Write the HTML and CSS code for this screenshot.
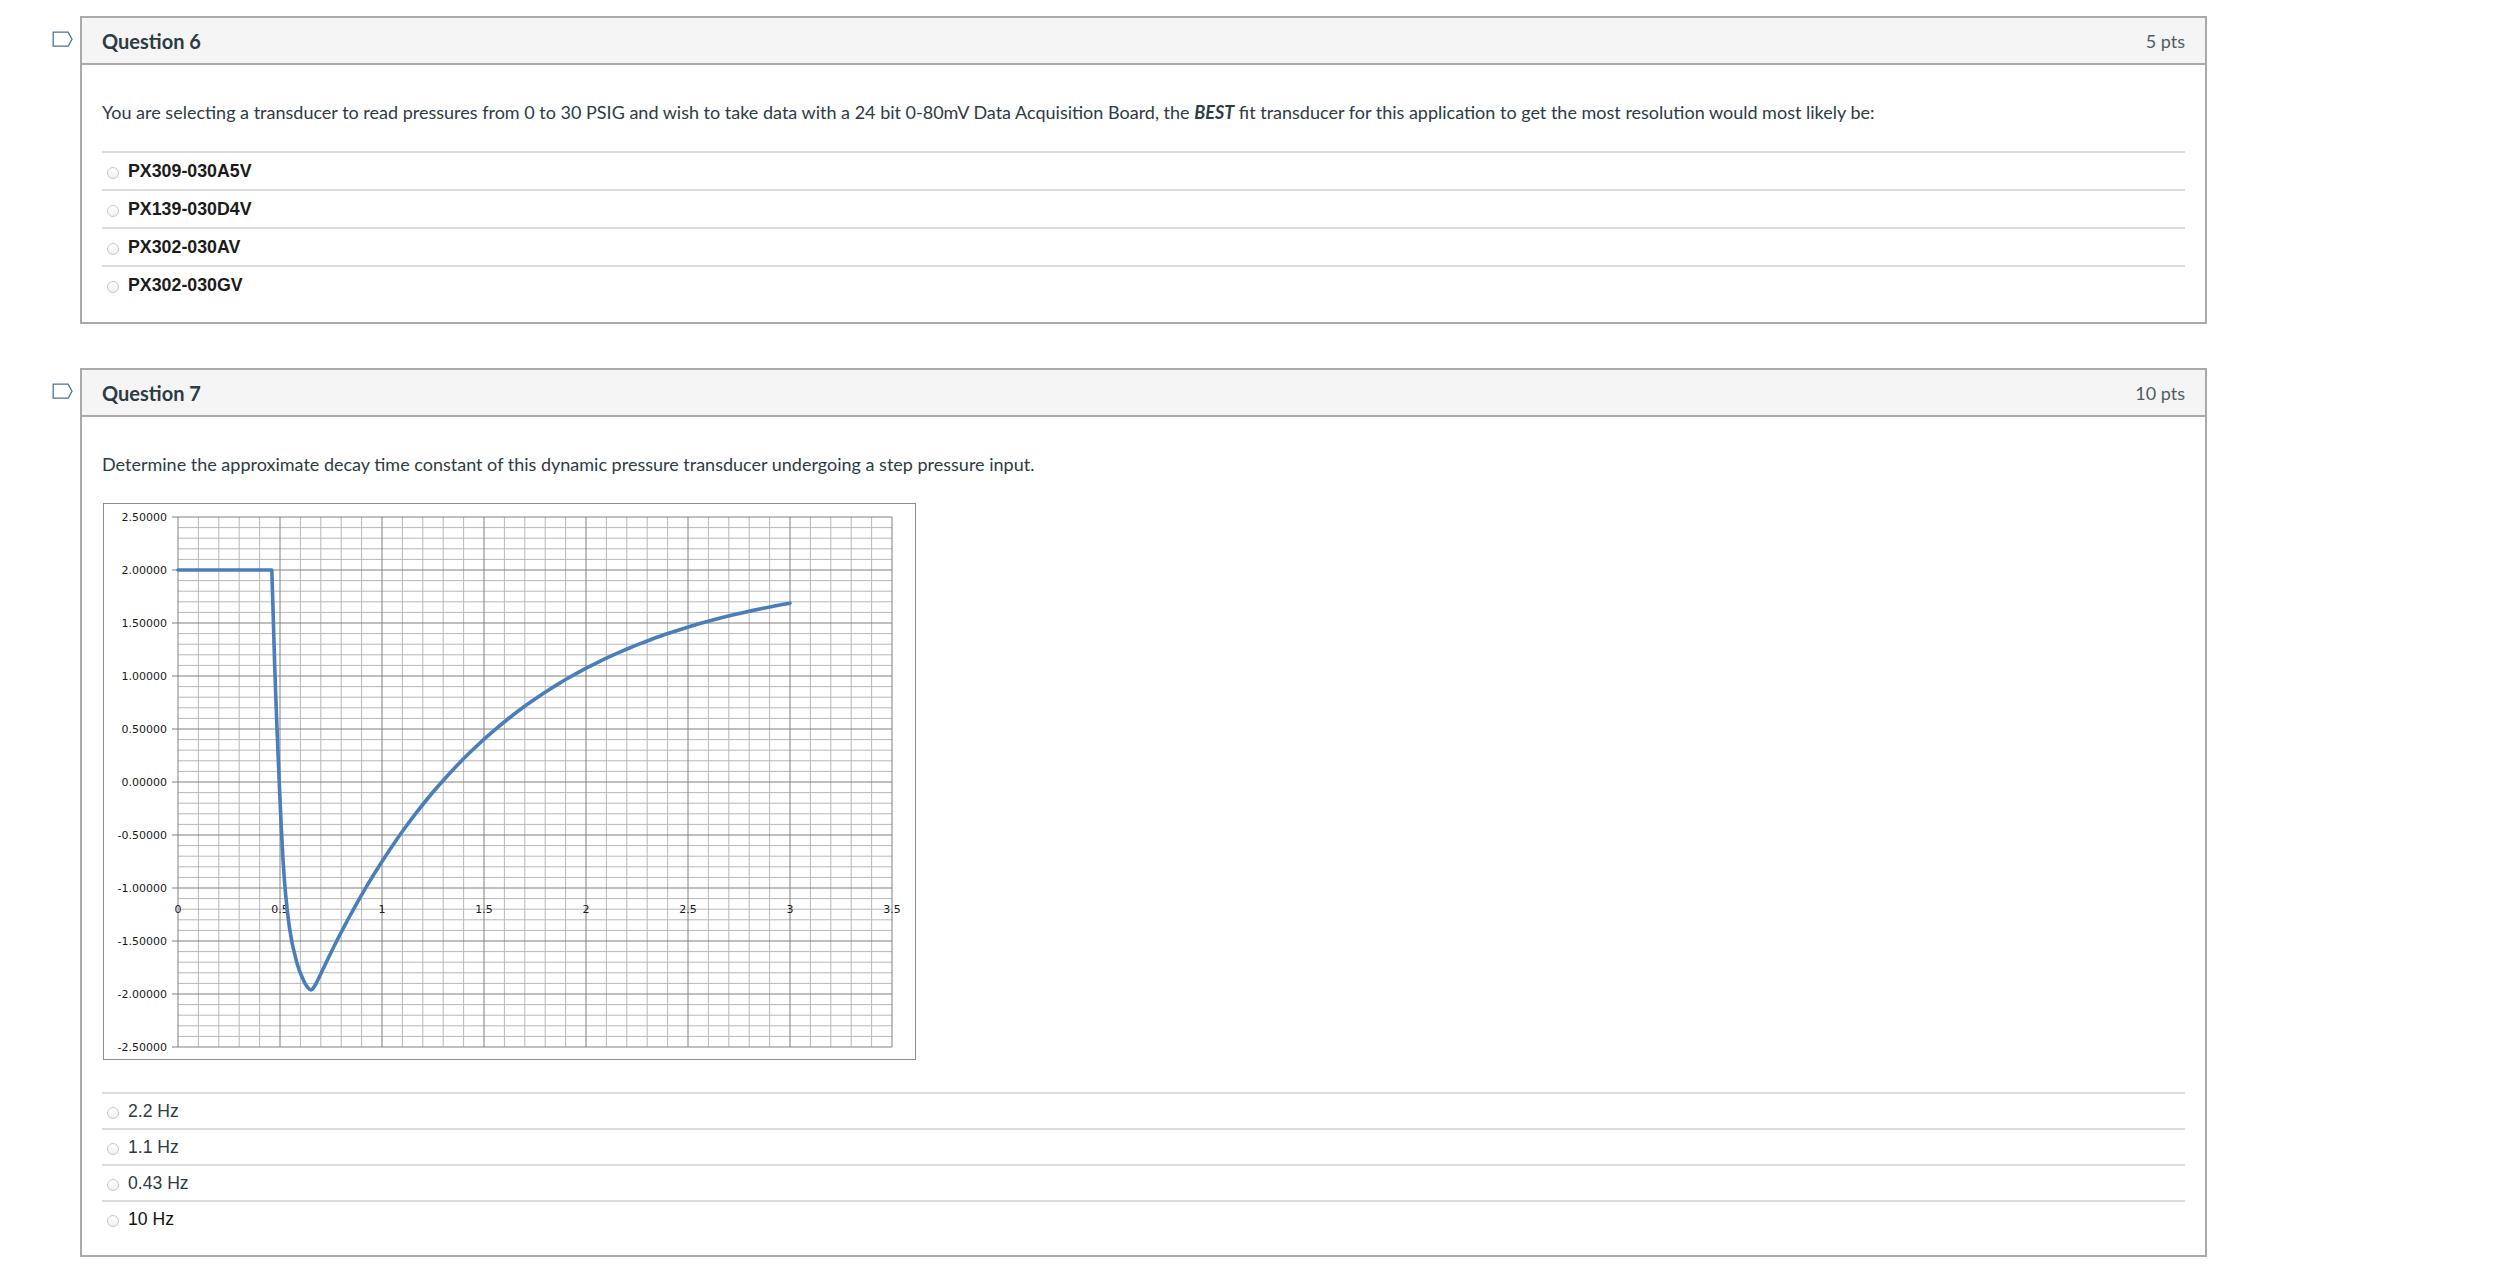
FILE: index.html
```html
<!DOCTYPE html>
<html lang="en">
<head>
<meta charset="utf-8">
<title>Quiz</title>
<link rel="stylesheet" href="styles.css">
</head>
<body>
<div class="quiz">

  <div class="question-row">
    <div class="flag">
      <svg width="22" height="17" viewBox="0 0 22 17"><path class="flag-path" d="M1.2 1.2H16.2L20 8.2L16.2 15.2H1.2Z"/></svg>
    </div>
    <div class="question">
      <div class="q-header">
        <span class="q-name">Question 6</span>
        <span class="q-pts">5 pts</span>
      </div>
      <div class="q-body">
        <div class="q-text">You are selecting a transducer to read pressures from 0 to 30 PSIG and wish to take data with a 24 bit 0-80mV Data Acquisition Board, the <strong><em>BEST</em></strong> fit transducer for this application to get the most resolution would most likely be:</div>
        <div class="answers answers-bold">
          <div class="answer"><span class="radio"></span><span class="answer-label">PX309-030A5V</span></div>
          <div class="answer"><span class="radio"></span><span class="answer-label">PX139-030D4V</span></div>
          <div class="answer"><span class="radio"></span><span class="answer-label">PX302-030AV</span></div>
          <div class="answer"><span class="radio"></span><span class="answer-label">PX302-030GV</span></div>
        </div>
      </div>
    </div>
  </div>

  <div class="question-row second">
    <div class="flag">
      <svg width="22" height="17" viewBox="0 0 22 17"><path class="flag-path" d="M1.2 1.2H16.2L20 8.2L16.2 15.2H1.2Z"/></svg>
    </div>
    <div class="question">
      <div class="q-header">
        <span class="q-name">Question 7</span>
        <span class="q-pts">10 pts</span>
      </div>
      <div class="q-body">
        <div class="q-text q-text-figure">
          <p class="q-para">Determine the approximate decay time constant of this dynamic pressure transducer undergoing a step pressure input.</p>
          <div class="chart">
            <svg class="chart-svg" width="811" height="555" viewBox="0 0 811 555">
              <path id="grid-minor" class="grid-minor" d=""/>
              <path id="grid-major" class="grid-major" d=""/>
              <path id="ticks" class="grid-major" d=""/>
              <g class="ylabels">
                <text x="63" y="17">2.50000</text>
                <text x="63" y="70">2.00000</text>
                <text x="63" y="123">1.50000</text>
                <text x="63" y="176">1.00000</text>
                <text x="63" y="229">0.50000</text>
                <text x="63" y="282">0.00000</text>
                <text x="63" y="335">-0.50000</text>
                <text x="63" y="388">-1.00000</text>
                <text x="63" y="441">-1.50000</text>
                <text x="63" y="494">-2.00000</text>
                <text x="63" y="547">-2.50000</text>
              </g>
              <g class="xlabels">
                <text x="74" y="409">0</text>
                <text x="176" y="409">0.5</text>
                <text x="278" y="409">1</text>
                <text x="380" y="409">1.5</text>
                <text x="482" y="409">2</text>
                <text x="584" y="409">2.5</text>
                <text x="686" y="409">3</text>
                <text x="788" y="409">3.5</text>
              </g>
              <path id="curve" class="curve" d=""/>
            </svg>
          </div>
        </div>
        <div class="answers answers-plain">
          <div class="answer"><span class="radio"></span><span class="answer-label">2.2 Hz</span></div>
          <div class="answer"><span class="radio"></span><span class="answer-label">1.1 Hz</span></div>
          <div class="answer"><span class="radio"></span><span class="answer-label">0.43 Hz</span></div>
          <div class="answer"><span class="radio"></span><span class="answer-label dark">10 Hz</span></div>
        </div>
      </div>
    </div>
  </div>

</div>
<script src="script.js"></script>
</body>
</html>
```

FILE: styles.css
```css
html, body {
  margin: 0;
  padding: 0;
  background: #ffffff;
}

body {
  font-family: Lato, "Open Sans", "Liberation Sans", sans-serif;
  color: #2d3b45;
  width: 2518px;
}

.quiz {
  padding: 16px 0 0 52px;
}

.question-row {
  display: flex;
  align-items: flex-start;
}

.question-row.second {
  margin-top: 44px;
}

.flag {
  width: 28px;
  flex: 0 0 28px;
  padding-top: 15px;
}

.flag svg {
  display: block;
}

.flag-path {
  fill: none;
  stroke: #4e7393;
  stroke-width: 1.3;
  stroke-linejoin: miter;
}

.question {
  width: 2127px;
  box-sizing: border-box;
  border: 2px solid #a9a9a9;
  background: #ffffff;
}

.q-header {
  height: 45px;
  box-sizing: content-box;
  background: #f5f5f5;
  border-bottom: 2px solid #a9a9a9;
  display: flex;
  align-items: center;
  justify-content: space-between;
  padding: 0 20px;
}

.q-name {
  font-weight: 700;
  font-size: 20px;
  color: #2d3b45;
}

.q-pts {
  font-size: 18px;
  color: #535b61;
}

.q-body {
  padding: 34px 20px 19px 20px;
}

.q-text {
  font-size: 18px;
  line-height: 26px;
  margin-bottom: 26px;
}

.q-text-figure {
  margin-bottom: 32px;
}

.q-para {
  margin: 0 0 26px 0;
}

.chart {
  width: 811px;
  height: 555px;
  border: 1px solid #8d8d8d;
  margin: 0 0 0 1px;
}

.chart-svg {
  display: block;
}

.grid-minor {
  fill: none;
  stroke: #b8b8b8;
  stroke-width: 1;
}

.grid-major {
  fill: none;
  stroke: #808080;
  stroke-width: 1;
}

.ylabels text {
  font-family: "DejaVu Sans", Verdana, sans-serif;
  font-size: 11px;
  fill: #1a1a1a;
  text-anchor: end;
}

.xlabels text {
  font-family: "DejaVu Sans", Verdana, sans-serif;
  font-size: 11px;
  fill: #1a1a1a;
  text-anchor: middle;
}

.curve {
  fill: none;
  stroke: #4a7ebb;
  stroke-width: 3.6;
  stroke-linejoin: round;
  stroke-linecap: round;
}

.answers {
  display: flex;
  flex-direction: column;
}

.answer {
  display: flex;
  align-items: center;
  border-top: 2px solid #dcdcdc;
  line-height: 26px;
}

.answers-bold .answer {
  padding: 5px 0;
}

.answers-plain .answer {
  padding: 4px 0;
}

.radio {
  width: 10px;
  height: 10px;
  border: 1px solid #c9c9c9;
  border-radius: 50%;
  background: linear-gradient(#ffffff, #f1f1f1);
  margin: 3px 9px 0 5px;
  flex: 0 0 auto;
}

.answer-label {
  font-family: "Liberation Sans", Arial, sans-serif;
  font-size: 17.6px;
}

.answers-bold .answer-label {
  font-weight: 700;
  font-size: 17.8px;
  color: #1b1b1b;
}

.answers-plain .answer-label {
  font-weight: 400;
  color: #2d3b45;
}

.answers-plain .answer-label.dark {
  color: #111111;
}
```

FILE: script.js
```js
(function () {
  function X(t) { return 74 + 204 * t; }
  function Y(v) { return 278 - 106 * v; }

  var minor = '';
  var major = '';
  var i, x, y, seg;

  for (i = 0; i <= 35; i++) {
    x = X(i / 10).toFixed(2);
    seg = 'M' + x + ' 13V543';
    if (i % 5 === 0) { major += seg; } else { minor += seg; }
  }
  for (i = 0; i <= 50; i++) {
    y = (13 + 10.6 * i).toFixed(2);
    seg = 'M74 ' + y + 'H788';
    if (i % 5 === 0) { major += seg; } else { minor += seg; }
  }

  var ticks = '';
  for (i = 0; i <= 10; i++) {
    y = (13 + 53 * i).toFixed(2);
    ticks += 'M68 ' + y + 'H74';
  }

  document.getElementById('grid-minor').setAttribute('d', minor);
  document.getElementById('grid-major').setAttribute('d', major);
  document.getElementById('ticks').setAttribute('d', ticks);

  /* measured response: flat at 2.0, sharp drop, rounded minimum,
     then exponential recovery toward 2.0 */
  var data = [
    [0.46, 2.0], [0.48, 0.77], [0.515, -0.74], [0.546, -1.37],
    [0.582, -1.70], [0.615, -1.87], [0.635, -1.935], [0.652, -1.962],
    [0.67, -1.925], [0.69, -1.85]
  ];
  var tau = 0.92, B = 2.75;
  var t = 0.713;
  while (t <= 3.0001) {
    data.push([t, 2 - B * Math.exp(-(t - 1) / tau)]);
    t += (t < 1 ? 0.03 : 0.05);
  }
  if (data[data.length - 1][0] < 2.999) {
    data.push([3.0, 2 - B * Math.exp(-2 / tau)]);
  }

  var pts = data.map(function (p) { return [X(p[0]), Y(p[1])]; });
  var d = 'M' + X(0) + ' ' + Y(2) + 'L' + pts[0][0].toFixed(2) + ' ' + pts[0][1].toFixed(2);
  for (i = 0; i < pts.length - 1; i++) {
    var p0 = pts[i - 1] || pts[i];
    var p1 = pts[i];
    var p2 = pts[i + 1];
    var p3 = pts[i + 2] || p2;
    var c1x = p1[0] + (p2[0] - p0[0]) / 6;
    var c1y = p1[1] + (p2[1] - p0[1]) / 6;
    var c2x = p2[0] - (p3[0] - p1[0]) / 6;
    var c2y = p2[1] - (p3[1] - p1[1]) / 6;
    d += 'C' + c1x.toFixed(2) + ' ' + c1y.toFixed(2) + ' ' +
         c2x.toFixed(2) + ' ' + c2y.toFixed(2) + ' ' +
         p2[0].toFixed(2) + ' ' + p2[1].toFixed(2);
  }
  document.getElementById('curve').setAttribute('d', d);
})();
```
